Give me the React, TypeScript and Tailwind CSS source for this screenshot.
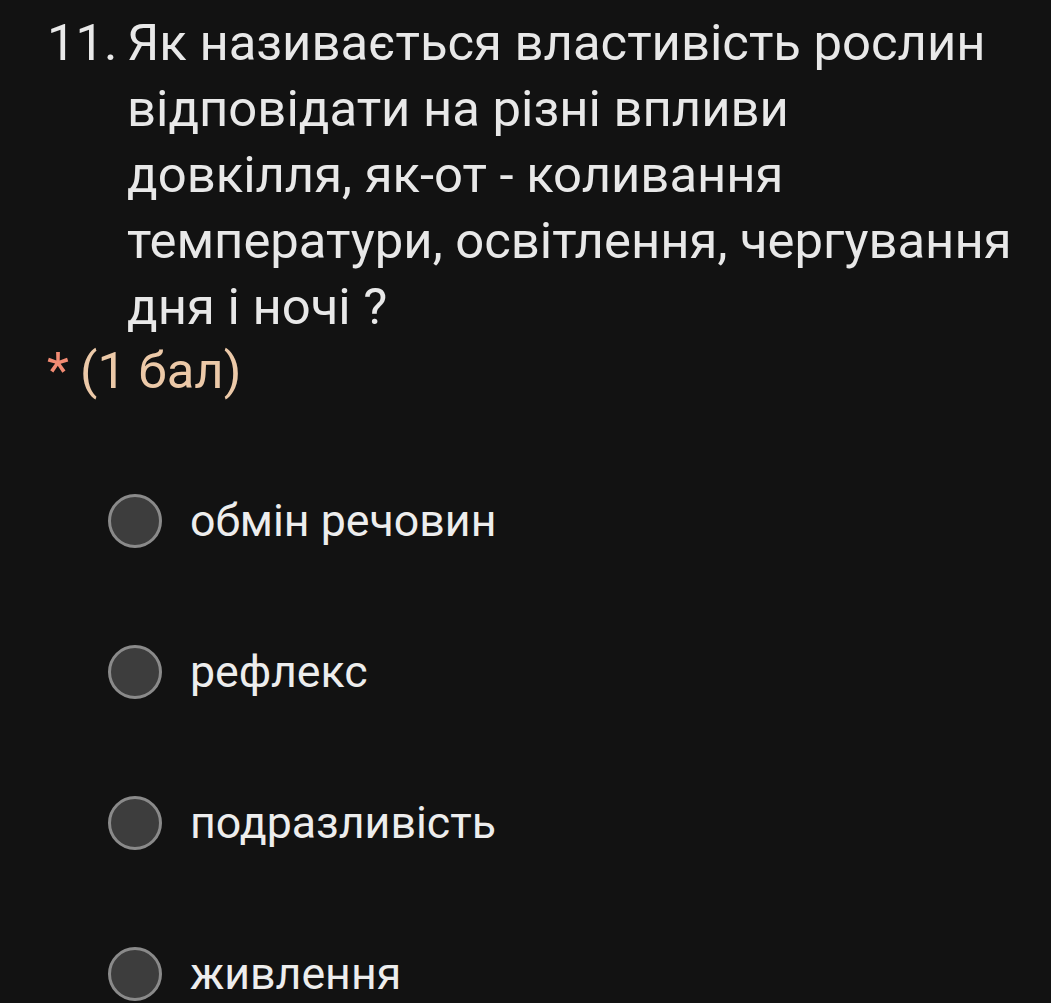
import React from "react";

const options = ["обмін речовин", "рефлекс", "подразливість", "живлення"];

export default function App() {
  return (
    <div
      className="w-[1051px] h-[1003px] overflow-hidden bg-[#121212] text-[#e8e8e8]"
      style={{ fontFamily: "Roboto, 'Noto Sans', sans-serif" }}
    >
      <div className="pt-[10px] pl-[47px] pr-[10px]">
        <div className="flex text-[50.8px] leading-[66px] whitespace-nowrap">
          <span className="w-[80px] shrink-0">11.</span>
          <span>
            Як називається властивість рослин
            <br />
            відповідати на різні впливи
            <br />
            довкілля, як-от - коливання
            <br />
            температури, освітлення, чергування
            <br />
            дня і ночі ?
          </span>
        </div>
        <div className="flex items-baseline text-[50.8px] leading-[62px]">
          <span className="text-[#f28b73] w-[33px]">*</span>
          <span className="text-[#ecc9a8]">(1 бал)</span>
        </div>
      </div>
      <div className="mt-[92px] flex flex-col gap-[97px] pl-[108px]">
        {options.map((o) => (
          <div key={o} className="flex items-center h-[54px]">
            <div className="w-[54px] h-[54px] rounded-full border-[3px] border-[#8a8a8a] bg-[#3d3d3d] shrink-0" />
            <span className="ml-[28px] text-[44.7px] leading-[54px] text-[#ededed]">{o}</span>
          </div>
        ))}
      </div>
    </div>
  );
}
